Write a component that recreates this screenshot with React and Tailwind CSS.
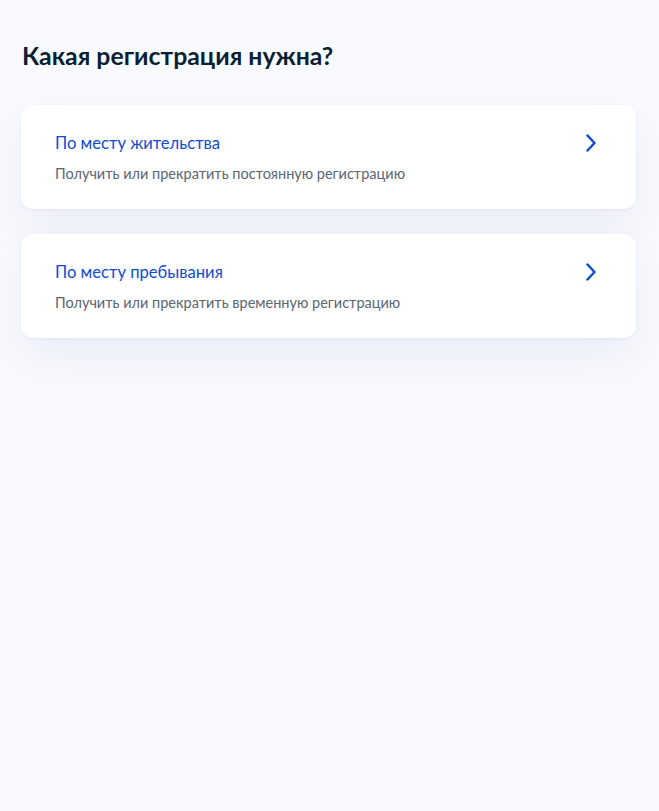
import React from "react";

const options = [
  { title: "По месту жительства", text: "Получить или прекратить постоянную регистрацию" },
  { title: "По месту пребывания", text: "Получить или прекратить временную регистрацию" },
];

function Chevron() {
  return (
    <svg className="w-[12px] h-[18px]" viewBox="0 0 12 18" fill="none">
      <path d="M2.5 1.5L9.5 9L2.5 16.5" stroke="#0d4cd3" strokeWidth="2.5" strokeLinecap="round" strokeLinejoin="round" />
    </svg>
  );
}

export default function App() {
  return (
    <div className="min-h-screen bg-[#f9fafe] pl-[21px] pr-[23px] pt-[40px] font-['Lato','Noto_Sans',sans-serif]">
      <h1 className="text-[24.8px] leading-[32px] font-bold text-[#0b1f33] ml-[1px] mb-[33px]">
        Какая регистрация нужна?
      </h1>

      <div className="flex flex-col gap-[25px]">
        {options.map((o) => (
          <div
            key={o.title}
            className="bg-white rounded-[12px] pl-[34px] pr-[39px] pt-[26px] pb-[25px] flex items-start justify-between shadow-[0_1px_3px_rgba(40,70,140,0.06),0_20px_44px_rgba(40,70,150,0.07)]"
          >
            <div>
              <div className="text-[16.6px] leading-[24px] text-[#0d4cd3]">{o.title}</div>
              <div className="mt-[9px] text-[14.5px] leading-[20px] text-[#5a6674]">{o.text}</div>
            </div>
            <div className="mt-[3px]">
              <Chevron />
            </div>
          </div>
        ))}
      </div>
    </div>
  );
}
